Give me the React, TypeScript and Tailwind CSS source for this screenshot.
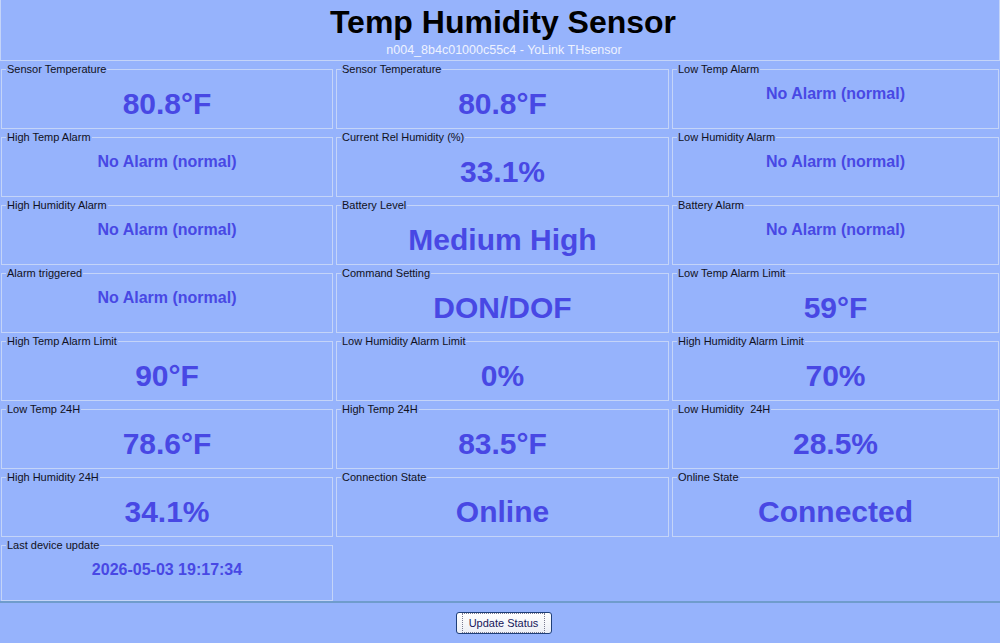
import React from "react"

type Item = {
  label: string
  value: string
  size: "big" | "small"
}

const items: Item[] = [
  { label: "Sensor Temperature", value: "80.8°F", size: "big" },
  { label: "Sensor Temperature", value: "80.8°F", size: "big" },
  { label: "Low Temp Alarm", value: "No Alarm (normal)", size: "small" },
  { label: "High Temp Alarm", value: "No Alarm (normal)", size: "small" },
  { label: "Current Rel Humidity (%)", value: "33.1%", size: "big" },
  { label: "Low Humidity Alarm", value: "No Alarm (normal)", size: "small" },
  { label: "High Humidity Alarm", value: "No Alarm (normal)", size: "small" },
  { label: "Battery Level", value: "Medium High", size: "big" },
  { label: "Battery Alarm", value: "No Alarm (normal)", size: "small" },
  { label: "Alarm triggered", value: "No Alarm (normal)", size: "small" },
  { label: "Command Setting", value: "DON/DOF", size: "big" },
  { label: "Low Temp Alarm Limit", value: "59°F", size: "big" },
  { label: "High Temp Alarm Limit", value: "90°F", size: "big" },
  { label: "Low Humidity Alarm Limit", value: "0%", size: "big" },
  { label: "High Humidity Alarm Limit", value: "70%", size: "big" },
  { label: "Low Temp 24H", value: "78.6°F", size: "big" },
  { label: "High Temp 24H", value: "83.5°F", size: "big" },
  { label: "Low Humidity  24H", value: "28.5%", size: "big" },
  { label: "High Humidity 24H", value: "34.1%", size: "big" },
  { label: "Connection State", value: "Online", size: "big" },
  { label: "Online State", value: "Connected", size: "big" },
]

function Field({ item, last }: { item: Item; last?: boolean }) {
  return (
    <fieldset
      className={`
        border border-[#c4d4f8] px-[4px] text-left
        ${last ? "h-[62px]" : "h-[66px]"}
      `}
    >
      <legend className="px-[1px] text-left text-[11px] leading-[13px] text-[#111122] whitespace-pre">
        {item.label}
      </legend>
      {item.size === "big" ? (
        <div className="mt-[11px] text-center text-[30px] leading-[34px] font-bold text-[#4848e4]">
          {item.value}
        </div>
      ) : (
        <div className="mt-[8px] text-center text-[16px] leading-[20px] font-bold text-[#4848e4]">
          {item.value}
        </div>
      )}
    </fieldset>
  )
}

export default function App() {
  return (
    <div
      className="w-[1000px] h-[643px] overflow-hidden flex flex-col bg-[#96b3fc]"
      style={{ fontFamily: '"Liberation Sans", Arial, sans-serif' }}
    >
      {/* Header */}
      <div className="h-[61px] border border-t-0 border-[#c4d4f8] flex flex-col items-center">
        <h1 className="mt-[4px] ml-[6px] text-[32px] leading-[36px] font-bold text-black">
          Temp Humidity Sensor
        </h1>
        <div className="mt-[3px] ml-[8px] text-[12.5px] leading-[14px] text-[#eef2ff]">
          n004_8b4c01000c55c4 - YoLink THsensor
        </div>
      </div>

      {/* Fields */}
      <div className="flex-1 mt-[2px] px-[1px] grid grid-cols-[332px_333px_1fr] gap-x-[3px] gap-y-[2px] content-start">
        {items.map((item, i) => (
          <Field key={i} item={item} />
        ))}
        <Field
          item={{ label: "Last device update", value: "2026-05-03 19:17:34", size: "small" }}
          last
        />
      </div>

      {/* Footer */}
      <div className="h-[42px] border-t-2 border-[#6f9ccc] flex items-start justify-center pt-[9px]">
        <button
          className="
            ml-[7px] h-[22px] w-[96px] rounded-[3px]
            border border-[#1f3f78]
            bg-[linear-gradient(#ffffff,#eceff6)]
            text-[11px] text-[#16165a]
            flex items-center justify-center
          "
        >
          <span className="px-[6px] py-[1px] border border-dotted border-[#7a7a90]">
            Update Status
          </span>
        </button>
      </div>
    </div>
  )
}
